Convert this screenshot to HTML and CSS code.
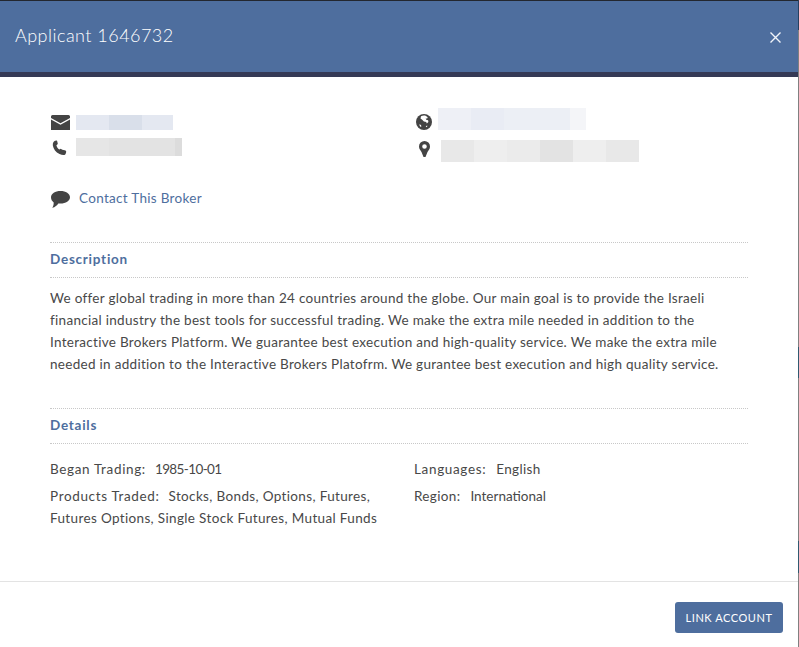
FILE: index.html
```html
<!DOCTYPE html>
<html lang="en">
<head>
<meta charset="utf-8">
<title>Applicant 1646732</title>
<link rel="stylesheet" href="styles.css">
</head>
<body>
<div class="modal">
  <header class="modal-head">
    <h1 class="modal-title">Applicant 1646732</h1>
    <svg class="close" viewBox="0 0 11 11" aria-label="Close"><path d="M0.5 0.5L10.5 10.5M10.5 0.5L0.5 10.5" stroke="#f2f5fa" stroke-width="1.4" fill="none"/></svg>
  </header>
  <main class="modal-body">
    <div class="contacts">
      <div class="contact-col">
        <div class="contact-row row-mail">
          <svg class="ico ico-mail" viewBox="0 0 19 15"><path fill="#444" d="M1.5 0h16A1.5 1.5 0 0 1 19 1.5V3l-9.500 5.200L0 3V1.500A1.500 1.500 0 0 1 1.500 0zM0 4.500l9.500 5.200L19 4.500V15H0z"/></svg>
          <div class="blur blur-mail"><i class="c1"></i><i class="c2"></i><i class="c3"></i></div>
        </div>
        <div class="contact-row row-phone">
          <svg class="ico ico-phone" viewBox="0 0 16 16"><path fill="#444" d="M3.200 0.300L5.300 0c.4 1.200.7 2.400.9 3.700L4.700 5c.4 1.900 1.500 3.500 3.100 4.700l1.500-.9c1 .8 2.300 1.400 4.300 1.500 1 .1 1.500.5 1.500 1.400 0 1.300-.4 2.700-1.200 3.500-1.500.6-3.600.3-5.900-.8C4 12.500 1.500 9 .9 5.200.7 3 1.500 1.200 3.200.3z"/></svg>
          <div class="blur blur-phone"><i class="c4"></i><i class="c5"></i><i class="c5"></i><i class="c6"></i></div>
        </div>
      </div>
      <div class="contact-col col-right">
        <div class="contact-row row-web">
          <svg class="ico ico-globe" viewBox="0 0 16 16"><circle cx="8" cy="8" r="8" fill="#444"/><path fill="#fff" d="M5 2.300c1.500-.9 3.500-1 5-.4l1.700 1.300-.5 1.200-1.500.1.500 1.300 1.900.4.300 1.700-1.600 1.500-.6-1.300-2.300-.6-1.700-1.700L4.500 4.500zM3 10.500l1.700.3.800 1.500-.9.800zM9.800 12.200l1.300-.8.300.8-1.200 1z"/></svg>
          <div class="blur blur-web"><i class="c7"></i><i class="c8"></i><i class="c9"></i><i class="c9"></i><i class="c10"></i></div>
        </div>
        <div class="contact-row row-pin">
          <svg class="ico ico-pin" viewBox="0 0 11 16"><path fill="#444" fill-rule="evenodd" d="M5.500 0A5.500 5.500 0 0 1 11 5.500c0 2.500-1.500 3.800-2.500 5.500L6.500 16h-2L2.500 11C1.500 9.300 0 8 0 5.500A5.500 5.500 0 0 1 5.500 0zm0 3.200a2.300 2.300 0 1 0 0 4.600 2.300 2.300 0 0 0 0-4.600z"/></svg>
          <div class="blur blur-addr"><i class="c11"></i><i class="c12"></i><i class="c13"></i><i class="c14"></i><i class="c12"></i><i class="c11"></i></div>
        </div>
      </div>
    </div>
    <div class="contact-link">
      <svg class="ico ico-chat" viewBox="0 0 19 17"><path fill="#444" d="M9.500 0C14.800 0 19 2.700 19 6.300s-4.200 6.300-9.500 6.300c-.8 0-1.500 0-2.200-.2C6 14.300 4.300 16 1.200 16.800c1-1.300 1.500-3 1.500-5.400C1 10.200 0 8.400 0 6.300 0 2.700 4.200 0 9.500 0z"/></svg>
      <a class="link" href="#">Contact This Broker</a>
    </div>
    <section class="section section-desc">
      <h2 class="section-title">Description</h2>
      <p class="desc">We offer global trading in more than 24 countries around the globe. Our main goal is to provide the Israeli financial industry the best tools for successful trading. We make the extra mile needed in addition to the Interactive Brokers Platform. We guarantee best execution and high-quality service. We make the extra mile needed in addition to the Interactive Brokers Platofrm. We gurantee best execution and high quality service.</p>
    </section>
    <section class="section section-details">
      <h2 class="section-title">Details</h2>
      <div class="details">
        <div class="details-col col-a">
          <p class="fact"><span class="key">Began Trading:</span><span class="date">1985-10-01</span></p>
          <p class="fact"><span class="key">Products Traded:</span><span class="val">Stocks, Bonds, Options, Futures, Futures Options, Single Stock Futures, Mutual Funds</span></p>
        </div>
        <div class="details-col col-b">
          <p class="fact"><span class="key key-lang">Languages:</span><span class="val">English</span></p>
          <p class="fact"><span class="key key-region">Region:</span><span class="val val-region">International</span></p>
        </div>
      </div>
    </section>
  </main>
  <footer class="modal-foot">
    <button class="btn" type="button">LINK ACCOUNT</button>
  </footer>
</div>
</body>
</html>
```
FILE: styles.css
```css
* { box-sizing: border-box; }
html, body { margin: 0; padding: 0; height: 100%; overflow: hidden; }
body { background: linear-gradient(to bottom, #27405f 0, #27405f 30px, #808080 30px, #808080 347px, #2f5a70 347px, #2f5a70 378px, #808080 378px, #808080 541px, #2f5a70 541px, #2f5a70 573px, #808080 573px); font-family: "Lato", "Open Sans", sans-serif; color: #444; }
.modal { width: 798px; height: 647px; background: #fff; display: flex; flex-direction: column; }
.modal-head { height: 77px; flex: none; background: #4e6e9e; border-top: 1px solid #23272f; border-bottom: 5px solid #353a55; display: flex; align-items: center; justify-content: space-between; padding: 0 17px 0 15px; }
.modal-title { margin: 0; font-size: 18px; font-weight: 300; color: #fff; letter-spacing: .47px; line-height: 24px; position: relative; top: -2px; }
.close { width: 11px; height: 11px; position: relative; top: 1px; }
.modal-body { flex: 1; padding: 31px 50px 0; }
.contacts { display: flex; height: 82px; }
.contact-col { width: 365px; flex: none; }
.contact-row { display: flex; }
.row-mail { height: 30px; padding-top: 7px; align-items: flex-start; }
.row-phone { height: 30px; }
.row-web { height: 32px; }
.row-pin { height: 32px; }
.ico { display: block; flex: none; }
.ico-mail { width: 19px; height: 15px; margin: 0 6px 0 1px; }
.ico-phone { width: 15px; height: 16px; margin: 2px 9px 0 2px; }
.ico-globe { width: 16px; height: 16px; margin: 6px 6px 0 1px; }
.ico-pin { width: 11px; height: 16px; margin: 1px 11px 0 4px; }
.blur { display: flex; }
.blur i { display: block; width: 33px; flex: none; }
.blur-mail { height: 15px; }
.blur-mail i:last-child { width: 31px; }
.blur-phone { height: 18px; }
.blur-phone i:last-child { width: 7px; }
.blur-web { height: 22px; }
.blur-web i:last-child { width: 16px; }
.blur-addr { height: 22px; }
.c1 { background: #e4e8f1; } .c2 { background: #d9dfea; } .c3 { background: #e4e8f1; }
.c4 { background: #e6e6e6; } .c5 { background: #e3e3e3; } .c6 { background: #dcdcdc; }
.c7 { background: #eef0f6; } .c8 { background: #e9ecf4; } .c9 { background: #eceff5; } .c10 { background: #f4f5f8; }
.c11 { background: #e8e8e8; } .c12 { background: #eeeeee; } .c13 { background: #ebebeb; } .c14 { background: #e3e3e3; }
.contact-link { display: flex; align-items: flex-start; height: 52px; }
.ico-chat { width: 19px; height: 17px; margin: 1px 9px 0 1px; }
.link { font-size: 13.500px; line-height: 18px; color: #4e6e9e; text-decoration: none; letter-spacing: .3px; margin-top: -1px; }
.section-title { margin: 0; height: 36px; border-top: 1px dotted #c8c8c8; border-bottom: 1px dotted #c8c8c8; font-size: 13.500px; font-weight: 700; color: #4e6e9e; line-height: 32px; letter-spacing: .75px; }
.section-desc { height: 166px; }
.desc { margin: 9px 0 0; font-size: 13.500px; line-height: 22px; color: #484848; letter-spacing: .295px; }
.details { display: flex; margin-top: 14px; }
.details-col { line-height: 22px; }
.col-a { width: 364px; padding-right: 20px; }
.col-b { flex: 1; }
.fact { margin: 0 0 5px; font-size: 13.500px; color: #484848; letter-spacing: .35px; }
.key { margin-right: 9px; letter-spacing: .65px; }
.key-lang { margin-right: 10px; }
.key-region { margin-right: 10px; letter-spacing: .35px; }
.val-region { letter-spacing: 0; }
.date { letter-spacing: -.6px; }
.modal-foot { height: 66px; flex: none; border-top: 1px solid #e3e3e3; display: flex; justify-content: flex-end; align-items: flex-start; padding: 20px 15px 0 0; }
.btn { width: 108px; height: 31px; border: 0; border-radius: 3px; background: #4e6e9e; color: #fff; font-family: inherit; font-size: 11px; letter-spacing: .55px; padding: 0; }
```
